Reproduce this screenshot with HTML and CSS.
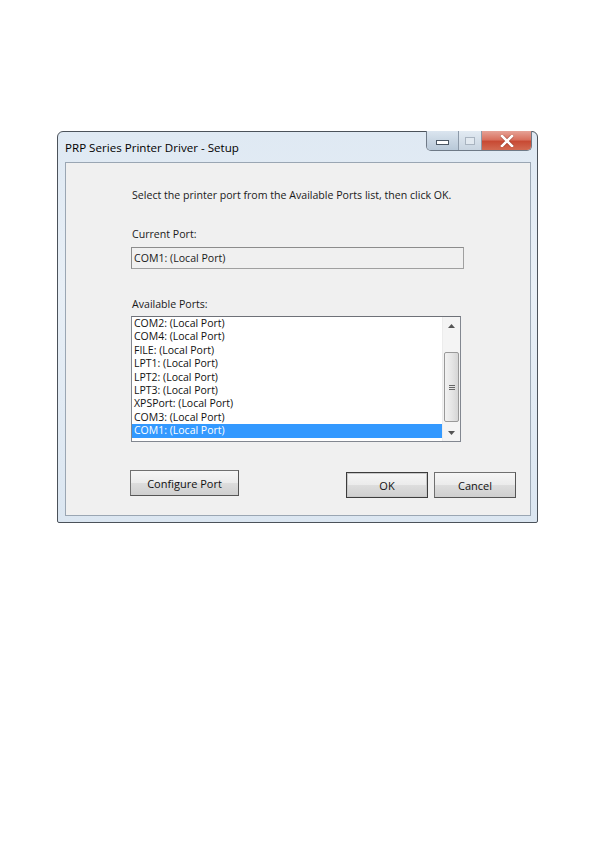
FILE: index.html
```html
<!DOCTYPE html>
<html>
<head>
<meta charset="utf-8">
<link rel="stylesheet" href="styles.css">
</head>
<body>
<div class="window">
  <div class="titlebar">
    <div class="title">PRP Series Printer Driver - Setup</div>
    <div class="caption-buttons">
      <div class="cbtn min"><span class="min-glyph"></span></div>
      <div class="cbtn max"><span class="max-glyph"></span></div>
      <div class="cbtn close">
        <svg width="14" height="12" viewBox="0 0 14 12"><path d="M2 1 L12 11 M12 1 L2 11" stroke="#5a1e14" stroke-width="4" stroke-linecap="square" opacity="0.35"/><path d="M2 1 L12 11 M12 1 L2 11" stroke="#ffffff" stroke-width="2.6" stroke-linecap="square"/></svg>
      </div>
    </div>
  </div>
  <div class="client">
    <div class="instr">Select the printer port from the Available Ports list, then click OK.</div>
    <div class="label cur-label">Current Port:</div>
    <div class="textbox">COM1: (Local Port)</div>
    <div class="label avail-label">Available Ports:</div>
    <div class="listbox">
      <div class="items">
        <div class="item">COM2: (Local Port)</div>
        <div class="item">COM4: (Local Port)</div>
        <div class="item">FILE: (Local Port)</div>
        <div class="item">LPT1: (Local Port)</div>
        <div class="item">LPT2: (Local Port)</div>
        <div class="item">LPT3: (Local Port)</div>
        <div class="item">XPSPort: (Local Port)</div>
        <div class="item">COM3: (Local Port)</div>
        <div class="item selected">COM1: (Local Port)</div>
      </div>
      <div class="scrollbar">
        <div class="arrow up"><svg width="7" height="4" viewBox="0 0 7 4"><path d="M0 4 L3.5 0 L7 4 Z" fill="#555"/></svg></div>
        <div class="track">
          <div class="thumb"><span class="grip"></span><span class="grip"></span><span class="grip"></span></div>
        </div>
        <div class="arrow down"><svg width="7" height="4" viewBox="0 0 7 4"><path d="M0 0 L3.5 4 L7 0 Z" fill="#555"/></svg></div>
      </div>
    </div>
    <div class="buttons">
      <div class="btn configure">Configure Port</div>
      <div class="spacer"></div>
      <div class="btn ok">OK</div>
      <div class="btn cancel">Cancel</div>
    </div>
  </div>
</div>
</body>
</html>
```
FILE: styles.css
```css
html, body {
  margin: 0;
  padding: 0;
  background: #ffffff;
}
body {
  width: 595px;
  height: 842px;
  font-family: "Open Sans", "Noto Sans", sans-serif;
  color: #1a1a1a;
}
.window {
  margin-left: 57px;
  margin-top: 131px;
  width: 479px;
  height: 390px;
  border: 1px solid #4b525a;
  border-radius: 6px 6px 2px 2px;
  background: linear-gradient(180deg, #dfe9f3 0%, #e8eff6 40%, #dbe6f1 100%);
  display: flex;
  flex-direction: column;
  box-sizing: content-box;
}
.titlebar {
  height: 30px;
  display: flex;
  align-items: flex-start;
  justify-content: space-between;
  flex-shrink: 0;
}
.title {
  margin-left: 7px;
  margin-top: 8px;
  font-size: 11.6px;
  line-height: 16px;
  color: #000;
}
.caption-buttons {
  display: flex;
  margin-right: 5px;
  margin-top: -1px;
  height: 19px;
  border: 1px solid #6f7a87;
  border-top: none;
  border-radius: 0 0 5px 5px;
  overflow: hidden;
}
.cbtn {
  height: 19px;
  display: flex;
  align-items: center;
  justify-content: center;
}
.min {
  width: 31px;
  background: linear-gradient(180deg, #dbe5ef 0%, #c9d6e3 50%, #b8c8d8 100%);
  border-right: 1px solid #8c99a8;
}
.min-glyph {
  width: 11px;
  height: 3px;
  background: #fff;
  border: 1px solid #4a5663;
  margin-top: 4px;
}
.max {
  width: 22px;
  background: linear-gradient(180deg, #e3ebf3 0%, #d5dfe9 50%, #c8d4e0 100%);
  border-right: 1px solid #8c99a8;
}
.max-glyph {
  width: 8px;
  height: 6px;
  border: 1px solid #a9b4c0;
  background: #e2e9f0;
}
.close {
  width: 49px;
  background: linear-gradient(180deg, #e6a296 0%, #d9715f 45%, #c84a34 55%, #d26a52 100%);
}
.client {
  flex: 1;
  margin: 0 6px 6px 7px;
  background: #f0f0f0;
  border: 1px solid #9aa6b3;
  padding-left: 65px;
  display: flex;
  flex-direction: column;
  font-size: 10.6px;
}
.instr {
  margin-top: 24px;
  margin-left: 1px;
  line-height: 16px;
  color: #1a1a1a;
}
.label {
  line-height: 16px;
  margin-left: 1px;
}
.cur-label {
  margin-top: 23px;
}
.textbox {
  margin-top: 5px;
  width: 329px;
  height: 20px;
  border: 1px solid #a0a0a0;
  border-top-color: #8c8c8c;
  border-left-color: #8c8c8c;
  background: #f0f0f0;
  line-height: 20px;
  padding-left: 2px;
  box-sizing: content-box;
}
.avail-label {
  margin-top: 27px;
}
.listbox {
  margin-top: 4px;
  width: 328px;
  height: 124px;
  border: 1px solid #828790;
  border-top-color: #6e7178;
  background: #fff;
  display: flex;
  font-size: 10.5px;
}
.items {
  flex: 1;
  padding-top: 0;
}
.item {
  height: 13.4px;
  line-height: 13.4px;
  padding-left: 2px;
  white-space: nowrap;
  color: #111;
}
.item.selected {
  background: #3399ff;
  color: #fff;
}
.scrollbar {
  width: 17px;
  background: #f4f4f4;
  border-left: 1px solid #ececec;
  display: flex;
  flex-direction: column;
}
.arrow {
  height: 17px;
  display: flex;
  align-items: center;
  justify-content: center;
}
.track {
  flex: 1;
  padding: 18px 0 2px 0;
  display: flex;
}
.thumb {
  flex: 1;
  margin: 0 1px;
  border: 1px solid #999;
  border-radius: 2px;
  background: linear-gradient(90deg, #f2f2f2 0%, #e6e6e6 50%, #d6d6d6 100%);
  display: flex;
  flex-direction: column;
  align-items: center;
  justify-content: center;
  gap: 1px;
}
.grip {
  width: 6px;
  height: 1px;
  background: #666;
}
.buttons {
  display: flex;
  margin-top: 28px;
  align-items: flex-start;
  width: 385px;
}
.spacer {
  flex: 1;
}
.btn {
  height: 24px;
  border: 1px solid #707070;
  border-right-color: #555;
  border-bottom-color: #555;
  background: linear-gradient(180deg, #f6f6f6 0%, #ebebeb 50%, #dddddd 51%, #cfcfcf 100%);
  display: flex;
  align-items: center;
  justify-content: center;
  font-size: 11px;
  color: #111;
  box-sizing: content-box;
}
.configure {
  width: 107px;
  margin-left: -1px;
}
.ok {
  width: 80px;
  margin-top: 2px;
  border: 1px solid #3c3c3c;
  box-shadow: inset 0 0 0 1px #c8c8c8;
}
.cancel {
  width: 80px;
  margin-top: 2px;
  margin-left: 6px;
}
```
